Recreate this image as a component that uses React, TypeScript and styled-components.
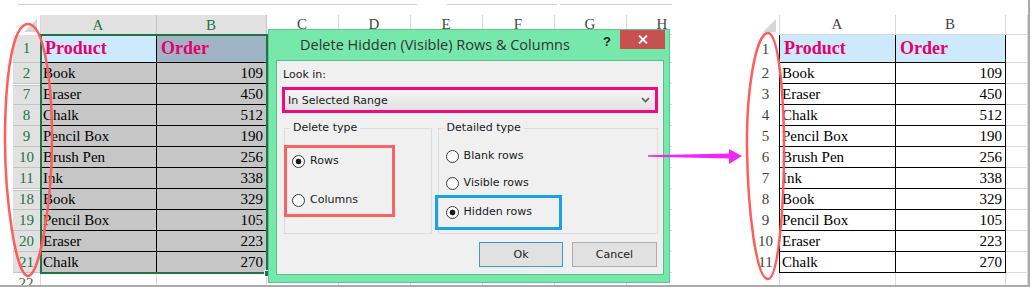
import React from 'react'
import styled, { createGlobalStyle, css } from 'styled-components'

const GlobalStyle = createGlobalStyle`
  html, body {
    margin: 0;
    padding: 0;
    background: #fff;
  }
  body {
    width: 1032px;
    height: 287px;
    overflow: hidden;
  }
`

const Canvas = styled.div`
  position: relative;
  width: 1030px;
  height: 287px;
  box-sizing: border-box;
  display: flex;
  align-items: flex-start;
  background: #fff;
  border-right: 2px solid #ababab;
  border-bottom: 2px solid #ababab;
  overflow: hidden;
  font-family: 'Liberation Serif', serif;
`

const LeftPane = styled.div`
  margin-left: 13px;
  width: 659px;
  flex: none;
  overflow: hidden;
  display: flex;
  flex-direction: column;
`

const RuleRow = styled.div`
  display: flex;
  margin: 4px 0 10px 5px;
`

const Rule = styled.div<{ $w: number; $gap?: number }>`
  width: ${(p) => p.$w}px;
  margin-right: ${(p) => p.$gap ?? 0}px;
  height: 1px;
  background: #d0d0d0;
`

const RightPane = styled.div`
  margin-left: 81px;
  margin-top: 15px;
  flex: 1;
  overflow: hidden;
`

const SheetGrid = styled.div<{ $cols: string; $rows: string }>`
  position: relative;
  display: grid;
  grid-template-columns: ${(p) => p.$cols};
  grid-template-rows: ${(p) => p.$rows};
  font-size: 15px;
  color: #000;
`

type Tone =
  | 'colSel'
  | 'col'
  | 'rowSel'
  | 'row'
  | 'rowDim'
  | 'sel'
  | 'plain'
  | 'grid'
  | 'titleA'
  | 'titleB'
  | 'titleR'

const tones: Record<Tone, ReturnType<typeof css>> = {
  colSel: css`
    background: #e1e1e1;
    color: #217346;
    border-right: 1px solid #c4c4c4;
    justify-content: center;
  `,
  col: css`
    background: #fff;
    color: #444;
    border-right: 1px solid #d9d9d9;
    border-bottom: 1px solid #d9d9d9;
    justify-content: center;
  `,
  rowSel: css`
    background: #e1e1e1;
    color: #217346;
    border-bottom: 1px solid #c4c4c4;
    justify-content: center;
  `,
  row: css`
    background: #fff;
    color: #444;
    border-right: 1px solid #000;
    justify-content: center;
  `,
  rowDim: css`
    background: #fff;
    color: #555;
    border-right: 1px solid #d9d9d9;
    justify-content: center;
  `,
  sel: css`
    background: #c6c6c6;
    border-right: 1px solid #000;
    border-bottom: 1px solid #000;
  `,
  plain: css`
    background: #fff;
    border-right: 1px solid #000;
    border-bottom: 1px solid #000;
  `,
  grid: css`
    background: #fff;
    border-right: 1px solid #dadada;
    border-bottom: 1px solid #dadada;
  `,
  titleA: css`
    background: #cde9fc;
    border-right: 1px solid #000;
    border-bottom: 1px solid #000;
  `,
  titleB: css`
    background: #9fb5c5;
    border-right: 1px solid #000;
    border-bottom: 1px solid #000;
  `,
  titleR: css`
    background: #cde9fc;
    border-right: 1px solid #000;
    border-bottom: 1px solid #000;
  `,
}

const Cell = styled.div<{ $tone: Tone; $num?: boolean; $title?: boolean; $split?: boolean }>`
  box-sizing: border-box;
  display: flex;
  align-items: center;
  overflow: hidden;
  white-space: nowrap;
  padding: 0 3px 0 ${(p) => (p.$title ? 4 : 2)}px;
  ${(p) => tones[p.$tone]}
  ${(p) => p.$num && 'justify-content: flex-end;'}
  ${(p) =>
    p.$title &&
    css`
      font-weight: bold;
      font-size: 18px;
      color: #e5006e;
    `}
  ${(p) => p.$split && 'box-shadow: inset 0 1px 0 #fff, inset 0 2px 0 #c4c4c4;'}
`

const Corner = styled.div`
  position: relative;
  background: #fff;
  border-right: 1px solid #d9d9d9;
  &::after {
    content: '';
    position: absolute;
    right: 3px;
    bottom: 3px;
    border-style: solid;
    border-width: 0 0 13px 13px;
    border-color: transparent transparent #d6d6d6 transparent;
  }
`

const Selection = styled.div`
  position: absolute;
  left: 27px;
  top: 19px;
  width: 228px;
  height: 240px;
  box-sizing: border-box;
  border: 2px solid #217346;
  pointer-events: none;
  &::after {
    content: '';
    position: absolute;
    right: -5px;
    bottom: -5px;
    width: 5px;
    height: 5px;
    background: #217346;
    border: 1px solid #fff;
  }
`

/* ---------- dialog ---------- */

const Dialog = styled.div`
  position: absolute;
  left: 268px;
  top: 29px;
  width: 402px;
  height: 254px;
  box-sizing: border-box;
  background: #77e8ac;
  border: 1px solid #5cc88f;
  display: flex;
  flex-direction: column;
  padding: 0 5px 7px 7px;
  font-family: 'DejaVu Sans', sans-serif;
  font-size: 11px;
  color: #1a1a1a;
`

const TitleBar = styled.div`
  height: 30px;
  display: flex;
  align-items: flex-start;
  margin-left: -7px;
  margin-right: -5px;
`

const Title = styled.div`
  margin-left: 31px;
  line-height: 30px;
  font-family: 'Open Sans', 'Noto Sans', sans-serif;
  font-size: 14.5px;
  color: #333;
`

const Help = styled.div`
  margin-left: auto;
  margin-top: 4px;
  font-family: 'Liberation Sans', sans-serif;
  font-weight: bold;
  font-size: 13px;
  color: #222;
`

const Close = styled.div`
  margin: 0 4px 0 9px;
  width: 45px;
  height: 19px;
  background: #c75050;
  display: flex;
  align-items: center;
  justify-content: center;
`

const Panel = styled.div`
  flex: 1;
  background: #f0f0f0;
  border: 1px solid #5fbf8c;
  display: flex;
  flex-direction: column;
  padding: 7px 5px 0 5px;
`

const Label = styled.div`
  margin-left: 1px;
  line-height: 14px;
`

const Select = styled.div`
  margin-top: 5px;
  height: 26px;
  box-sizing: border-box;
  border: 3px solid #ee0b7d;
  background: linear-gradient(#f4f4f4, #e2e2e2);
  display: flex;
  align-items: center;
  justify-content: space-between;
  padding: 0 5px 0 3px;
`

const Groups = styled.div`
  display: flex;
  gap: 6px;
  margin: 8px 0 0 2px;
`

const Group = styled.fieldset<{ $w: number }>`
  width: ${(p) => p.$w}px;
  height: 113px;
  min-width: 0;
  box-sizing: border-box;
  margin: 0;
  padding: 0;
  border: 1px solid #dcdcdc;
`

const Legend = styled.legend`
  margin-left: 5px;
  padding: 0 3px;
  line-height: 14px;
`

const Mark = styled.div<{ $color: string; $w: number; $h: number; $dx: number; $dy: number }>`
  width: ${(p) => p.$w}px;
  height: ${(p) => p.$h}px;
  margin: ${(p) => p.$dy}px 0 0 ${(p) => p.$dx}px;
  box-sizing: border-box;
  border: 3px solid ${(p) => p.$color};
  display: flex;
  flex-direction: column;
`

const RadioList = styled.div<{ $gap: number; $pad: string }>`
  display: flex;
  flex-direction: column;
  gap: ${(p) => p.$gap}px;
  padding: ${(p) => p.$pad};
`

const RadioRow = styled.div`
  display: flex;
  align-items: center;
  gap: 5px;
  height: 14px;
  line-height: 14px;
`

const Dot = styled.span<{ $on?: boolean }>`
  width: 13px;
  height: 13px;
  box-sizing: border-box;
  border-radius: 50%;
  border: 1px solid #3a3a3a;
  background: radial-gradient(circle, ${(p) => (p.$on ? '#1a1a1a 0 2.6px, #fff 3.2px' : '#fff 0')});
  flex: none;
`

const Buttons = styled.div`
  display: flex;
  justify-content: flex-end;
  gap: 9px;
  margin: 8px 1px 0 0;
`

const Button = styled.div<{ $primary?: boolean; $w: number }>`
  width: ${(p) => p.$w}px;
  height: 25px;
  box-sizing: border-box;
  border: 1px solid ${(p) => (p.$primary ? '#3c98e6' : '#adadad')};
  background: #e1e1e1;
  display: flex;
  align-items: center;
  justify-content: center;
`

const Overlay = styled.svg`
  position: absolute;
  left: 0;
  top: 0;
  pointer-events: none;
`

const leftRows: [string, string, string][] = [
  ['2', 'Book', '109'],
  ['7', 'Eraser', '450'],
  ['8', 'Chalk', '512'],
  ['9', 'Pencil Box', '190'],
  ['10', 'Brush Pen', '256'],
  ['11', 'Ink', '338'],
  ['18', 'Book', '329'],
  ['19', 'Pencil Box', '105'],
  ['20', 'Eraser', '223'],
  ['21', 'Chalk', '270'],
]

const items = leftRows.map(([, name, qty]) => [name, qty])
const extraCols = ['C', 'D', 'E', 'F', 'G', 'H']

const LeftSheet = () => (
  <SheetGrid $cols="28px 116px 110px repeat(6, 72px)" $rows="20px 28px repeat(11, 21px)">
    <Corner />
    <Cell $tone="colSel">A</Cell>
    <Cell $tone="colSel">B</Cell>
    {extraCols.map((c) => (
      <Cell key={c} $tone="col">
        {c}
      </Cell>
    ))}

    <Cell $tone="rowSel">1</Cell>
    <Cell $tone="titleA" $title>
      Product
    </Cell>
    <Cell $tone="titleB" $title>
      Order
    </Cell>
    {extraCols.map((c) => (
      <Cell key={c} $tone="grid" />
    ))}

    {leftRows.map(([n, name, qty]) => (
      <React.Fragment key={n}>
        <Cell $tone="rowSel" $split={n === '7' || n === '18'}>
          {n}
        </Cell>
        <Cell $tone="sel">{name}</Cell>
        <Cell $tone="sel" $num>
          {qty}
        </Cell>
        {extraCols.map((c) => (
          <Cell key={c} $tone="grid" />
        ))}
      </React.Fragment>
    ))}

    <Cell $tone="rowDim">22</Cell>
    <Cell $tone="grid" />
    <Cell $tone="grid" />
    {extraCols.map((c) => (
      <Cell key={c} $tone="grid" />
    ))}
    <Selection />
  </SheetGrid>
)

const RightSheet = () => (
  <SheetGrid $cols="27px 116px 110px 1fr" $rows="20px 28px repeat(11, 21px)">
    <Corner />
    <Cell $tone="col">A</Cell>
    <Cell $tone="col">B</Cell>
    <Cell $tone="col" />

    <Cell $tone="row">1</Cell>
    <Cell $tone="titleR" $title>
      Product
    </Cell>
    <Cell $tone="titleR" $title>
      Order
    </Cell>
    <Cell $tone="grid" />

    {items.map(([name, qty], i) => (
      <React.Fragment key={i}>
        <Cell $tone="row">{i + 2}</Cell>
        <Cell $tone="plain">{name}</Cell>
        <Cell $tone="plain" $num>
          {qty}
        </Cell>
        <Cell $tone="grid" />
      </React.Fragment>
    ))}

    <Cell $tone="rowDim" />
    <Cell $tone="grid" />
    <Cell $tone="grid" />
    <Cell $tone="grid" />
  </SheetGrid>
)

const Radio = ({ label, on }: { label: string; on?: boolean }) => (
  <RadioRow>
    <Dot $on={on} />
    {label}
  </RadioRow>
)

const DeleteDialog = () => (
  <Dialog>
    <TitleBar>
      <Title>Delete Hidden (Visible) Rows &amp; Columns</Title>
      <Help>?</Help>
      <Close>
        <svg width="10" height="9" viewBox="0 0 10 9">
          <path d="M1 0.5 L9 8.5 M9 0.5 L1 8.5" stroke="#fff" strokeWidth="1.8" />
        </svg>
      </Close>
    </TitleBar>
    <Panel>
      <Label>Look in:</Label>
      <Select>
        <span>In Selected Range</span>
        <svg width="9" height="6" viewBox="0 0 9 6">
          <path d="M1 1 L4.5 4.5 L8 1" stroke="#5a5a5a" strokeWidth="1.6" fill="none" />
        </svg>
      </Select>
      <Groups>
        <Group $w={148}>
          <Legend>Delete type</Legend>
          <Mark $color="#fb6262" $w={111} $h={72} $dx={-1} $dy={10}>
            <RadioList $gap={25} $pad="6px 0 0 5px">
              <Radio label="Rows" on />
              <Radio label="Columns" />
            </RadioList>
          </Mark>
        </Group>
        <Group $w={221}>
          <Legend>Detailed type</Legend>
          <RadioList $gap={13} $pad="14px 0 0 7px">
            <Radio label="Blank rows" />
            <Radio label="Visible rows" />
          </RadioList>
          <Mark $color="#19a3e6" $w={127} $h={35} $dx={-4} $dy={5}>
            <RadioList $gap={0} $pad="7px 0 0 8px">
              <Radio label="Hidden rows" on />
            </RadioList>
          </Mark>
        </Group>
      </Groups>
      <Buttons>
        <Button $primary $w={84}>
          Ok
        </Button>
        <Button $w={85}>Cancel</Button>
      </Buttons>
    </Panel>
  </Dialog>
)

const App = () => (
  <>
    <GlobalStyle />
    <Canvas>
      <LeftPane>
        <RuleRow>
          <Rule $w={399} $gap={30} />
          <Rule $w={110} $gap={3} />
          <Rule $w={112} />
        </RuleRow>
        <LeftSheet />
      </LeftPane>
      <RightPane>
        <RightSheet />
      </RightPane>
      <DeleteDialog />
      <Overlay width="1032" height="287" viewBox="0 0 1032 287">
        <path
          d="M28 24 C44 24 52 80 52 140 C52 200 40 276 28 276 C16 276 5 200 5 140 C5 80 12 24 28 24 Z"
          fill="none"
          stroke="#ff5c5c"
          strokeWidth="2.5"
        />
        <path
          d="M768 33 C778 33 784 90 784 150 C784 210 778 279 768 279 C756 279 748 210 747 150 C746 90 756 33 768 33 Z"
          fill="none"
          stroke="#ff5c5c"
          strokeWidth="2.5"
        />
        <polygon
          points="648,155.3 729,153.6 729,149 742,156 729,164 729,158.6 648,156.7"
          fill="#f128f1"
        />
      </Overlay>
    </Canvas>
  </>
)

export default App
